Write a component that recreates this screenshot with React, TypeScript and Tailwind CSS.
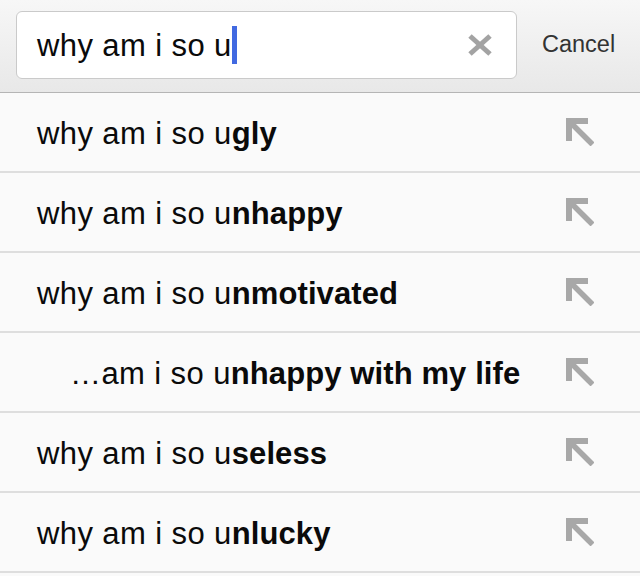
const rows = [
  { base: "why am i so u", rest: "gly" },
  { base: "why am i so u", rest: "nhappy" },
  { base: "why am i so u", rest: "nmotivated" },
  { base: "…am i so u", rest: "nhappy with my life", indent: true },
  { base: "why am i so u", rest: "seless" },
  { base: "why am i so u", rest: "nlucky" },
]

function ArrowIcon() {
  return (
    <svg width="28" height="28" viewBox="0 0 28 28" className="shrink-0">
      <path d="M0 0H22V6H6V23H0Z" fill="#a8a8a8" />
      <line x1="3" y1="3" x2="26.5" y2="26.5" stroke="#a8a8a8" strokeWidth="5.5" />
    </svg>
  )
}

function ClearIcon() {
  return (
    <svg width="24" height="22" viewBox="0 0 24 22" className="shrink-0">
      <line x1="2" y1="2" x2="22" y2="20" stroke="#a3a3a3" strokeWidth="5" />
      <line x1="22" y1="2" x2="2" y2="20" stroke="#a3a3a3" strokeWidth="5" />
    </svg>
  )
}

export default function App() {
  return (
    <div className="h-[576px] w-[640px] overflow-hidden bg-[#fafafa] font-['Liberation_Sans',Arial,sans-serif] text-[#0a0a0a]">
      <header className="flex h-[93px] items-start border-b border-[#b5b5b5] bg-gradient-to-b from-[#f7f7f7] to-[#e8e8e8] pt-[11px]">
        <div className="ml-4 flex h-[68px] w-[501px] items-center rounded-[6px] border border-[#cacaca] bg-white pl-[20px] pr-[24px]">
          <span className="text-[31px] leading-none tracking-[0.4px]">why am i so u</span>
          <span className="h-[38px] w-[5px] bg-[#4169e1]" />
          <span className="flex-1" />
          <ClearIcon />
        </div>
        <div className="ml-[25px] flex h-[68px] items-center text-[23.5px] text-[#333]">Cancel</div>
      </header>
      <ul>
        {rows.map((r, i) => (
          <li
            key={i}
            className="flex h-[80px] items-center justify-between border-b-2 border-[#dedede] pr-[46px]"
          >
            <span
              className={`pt-[2px] text-[31px] leading-none tracking-[0.4px] ${r.indent ? "pl-[70px]" : "pl-[37px]"}`}
            >
              {r.base}
              <span className="font-bold tracking-[0.1px]">{r.rest}</span>
            </span>
            <ArrowIcon />
          </li>
        ))}
      </ul>
    </div>
  )
}
